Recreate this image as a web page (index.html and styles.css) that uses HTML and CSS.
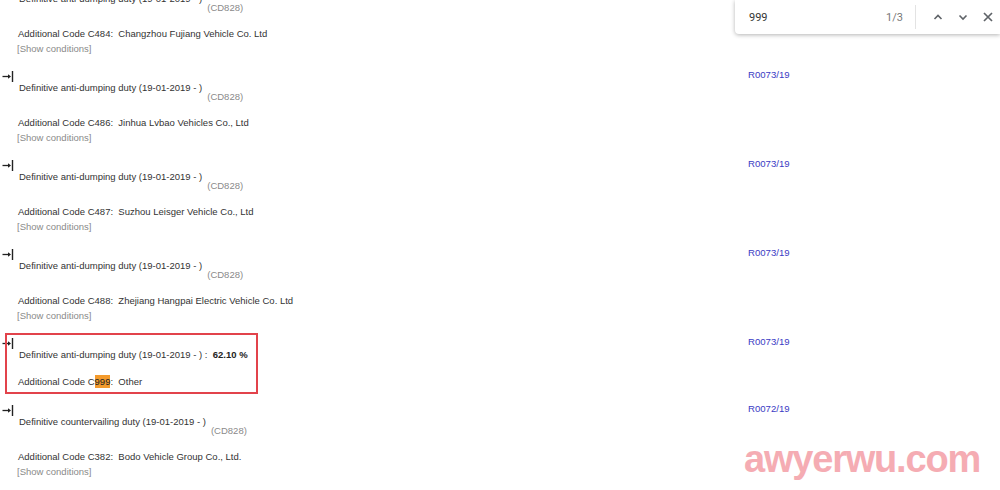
FILE: index.html
```html
<!DOCTYPE html>
<html>
<head>
<meta charset="utf-8">
<link rel="stylesheet" href="styles.css">
</head>
<body>
<div class="page">
  <div class="block">
    <div class="main">
      <div class="arrow"><svg width="12" height="12" viewBox="0 0 12 12"><path d="M0.5 6.5H7.5" stroke="#222" stroke-width="1.3"/><path d="M6 4.3L9 6.5L6 8.7Z" fill="#222"/><path d="M10.5 1V12" stroke="#222" stroke-width="1.4"/></svg></div>
      <div class="duty"><span>Definitive anti-dumping duty (19-01-2019 - )</span><span class="code">(CD828)</span></div>
      <div class="addl">Additional Code C484:&nbsp; Changzhou Fujiang Vehicle Co. Ltd</div>
      <div class="show">[Show conditions]</div>
    </div>
    <div class="reg"></div>
  </div>

  <div class="block">
    <div class="main">
      <div class="arrow"><svg width="12" height="12" viewBox="0 0 12 12"><path d="M0.5 6.5H7.5" stroke="#222" stroke-width="1.3"/><path d="M6 4.3L9 6.5L6 8.7Z" fill="#222"/><path d="M10.5 1V12" stroke="#222" stroke-width="1.4"/></svg></div>
      <div class="duty"><span>Definitive anti-dumping duty (19-01-2019 - )</span><span class="code">(CD828)</span></div>
      <div class="addl">Additional Code C486:&nbsp; Jinhua Lvbao Vehicles Co., Ltd</div>
      <div class="show">[Show conditions]</div>
    </div>
    <div class="reg"><a href="#">R0073/19</a></div>
  </div>

  <div class="block">
    <div class="main">
      <div class="arrow"><svg width="12" height="12" viewBox="0 0 12 12"><path d="M0.5 6.5H7.5" stroke="#222" stroke-width="1.3"/><path d="M6 4.3L9 6.5L6 8.7Z" fill="#222"/><path d="M10.5 1V12" stroke="#222" stroke-width="1.4"/></svg></div>
      <div class="duty"><span>Definitive anti-dumping duty (19-01-2019 - )</span><span class="code">(CD828)</span></div>
      <div class="addl">Additional Code C487:&nbsp; Suzhou Leisger Vehicle Co., Ltd</div>
      <div class="show">[Show conditions]</div>
    </div>
    <div class="reg"><a href="#">R0073/19</a></div>
  </div>

  <div class="block">
    <div class="main">
      <div class="arrow"><svg width="12" height="12" viewBox="0 0 12 12"><path d="M0.5 6.5H7.5" stroke="#222" stroke-width="1.3"/><path d="M6 4.3L9 6.5L6 8.7Z" fill="#222"/><path d="M10.5 1V12" stroke="#222" stroke-width="1.4"/></svg></div>
      <div class="duty"><span>Definitive anti-dumping duty (19-01-2019 - )</span><span class="code">(CD828)</span></div>
      <div class="addl">Additional Code C488:&nbsp; Zhejiang Hangpai Electric Vehicle Co. Ltd</div>
      <div class="show">[Show conditions]</div>
    </div>
    <div class="reg"><a href="#">R0073/19</a></div>
  </div>

  <div class="block block-hl">
    <div class="hl-box"></div>
    <div class="main">
      <div class="arrow"><svg width="12" height="12" viewBox="0 0 12 12"><path d="M0.5 6.5H7.5" stroke="#222" stroke-width="1.3"/><path d="M6 4.3L9 6.5L6 8.7Z" fill="#222"/><path d="M10.5 1V12" stroke="#222" stroke-width="1.4"/></svg></div>
      <div class="duty"><span>Definitive anti-dumping duty (19-01-2019 - ) :&nbsp; <b class="rate">62.10 %</b></span></div>
      <div class="addl addl-hl">Additional Code C<mark class="match">999</mark>:&nbsp; Other</div>
    </div>
    <div class="reg"><a href="#">R0073/19</a></div>
  </div>

  <div class="block">
    <div class="main">
      <div class="arrow"><svg width="12" height="12" viewBox="0 0 12 12"><path d="M0.5 6.5H7.5" stroke="#222" stroke-width="1.3"/><path d="M6 4.3L9 6.5L6 8.7Z" fill="#222"/><path d="M10.5 1V12" stroke="#222" stroke-width="1.4"/></svg></div>
      <div class="duty"><span>Definitive countervailing duty (19-01-2019 - )</span><span class="code">(CD828)</span></div>
      <div class="addl">Additional Code C382:&nbsp; Bodo Vehicle Group Co., Ltd.</div>
      <div class="show">[Show conditions]</div>
    </div>
    <div class="reg"><a href="#">R0072/19</a></div>
  </div>
</div>

<div class="findbar">
  <span class="find-query">999</span>
  <span class="find-count">1/3</span>
  <span class="find-sep"></span>
  <span class="find-btn"><svg width="12" height="12" viewBox="0 0 12 12"><path d="M2.5 8L6 4.5L9.5 8" fill="none" stroke="#5f6368" stroke-width="1.6"/></svg></span>
  <span class="find-btn"><svg width="12" height="12" viewBox="0 0 12 12"><path d="M2.5 4.5L6 8L9.5 4.5" fill="none" stroke="#5f6368" stroke-width="1.6"/></svg></span>
  <span class="find-btn"><svg width="12" height="12" viewBox="0 0 12 12"><path d="M2 2L10 10M10 2L2 10" fill="none" stroke="#5f6368" stroke-width="1.7"/></svg></span>
</div>

<div class="watermark">awyerwu.com</div>
</body>
</html>
```

FILE: styles.css
```css
html, body {
  margin: 0;
  padding: 0;
  background: #fff;
  overflow: hidden;
}
body {
  width: 1000px;
  height: 490px;
  position: relative;
  font-family: "Liberation Sans", Arial, sans-serif;
  font-size: 9.5px;
  color: #333;
}
.page {
  margin-top: -19px;
  display: flex;
  flex-direction: column;
}
.block {
  display: flex;
  padding-bottom: 15px;
}
.block-hl {
  position: relative;
  padding-bottom: 16px;
}
.hl-box {
  position: absolute;
  left: 5px;
  top: -4px;
  width: 249px;
  height: 57px;
  border: 2px solid #e2434b;
  pointer-events: none;
}
.main {
  width: 748px;
  display: flex;
  flex-direction: column;
}
.arrow {
  height: 12px;
  padding-left: 2px;
}
.arrow svg {
  display: block;
}
.duty {
  display: flex;
  align-items: flex-start;
  padding-left: 19px;
  line-height: 12px;
  white-space: pre;
}
.code {
  margin-left: 5px;
  margin-top: 9px;
  color: #8a8a8a;
}
.rate {
  font-weight: bold;
  color: #222;
}
.addl {
  padding-left: 18px;
  margin-top: 14px;
  line-height: 12px;
  white-space: pre;
}
.addl-hl {
  margin-top: 15px;
}
.match {
  background: #f39a2c;
  color: #222;
  padding: 1px 0;
}
.show {
  padding-left: 17px;
  margin-top: 3px;
  line-height: 12px;
  color: #8a8a8a;
}
.reg {
  line-height: 12px;
  font-size: 9.6px;
  margin-top: -1px;
}
.reg a {
  color: #3b3bc4;
  text-decoration: none;
}
.findbar {
  position: absolute;
  top: 0;
  left: 735px;
  width: 265px;
  height: 34px;
  background: #fff;
  border-radius: 0 0 0 4px;
  box-shadow: 0 1px 4px rgba(0, 0, 0, 0.3);
  display: flex;
  align-items: center;
  font-family: Roboto, "Liberation Sans", sans-serif;
  font-size: 11px;
}
.find-query {
  margin-left: 14px;
  color: #333;
  flex: 1;
}
.find-count {
  color: #777;
  margin-right: 12px;
}
.find-sep {
  width: 1px;
  height: 24px;
  background: #e3e3e3;
  margin-right: 9px;
}
.find-btn {
  width: 25px;
  height: 24px;
  display: flex;
  align-items: center;
  justify-content: center;
}
.find-btn svg {
  display: block;
}
.watermark {
  position: absolute;
  left: 744px;
  top: 438px;
  font-family: "Liberation Sans", Arial, sans-serif;
  font-weight: bold;
  font-size: 38px;
  letter-spacing: -1.2px;
  color: #f4a4ab;
  opacity: 0.9;
}
```
